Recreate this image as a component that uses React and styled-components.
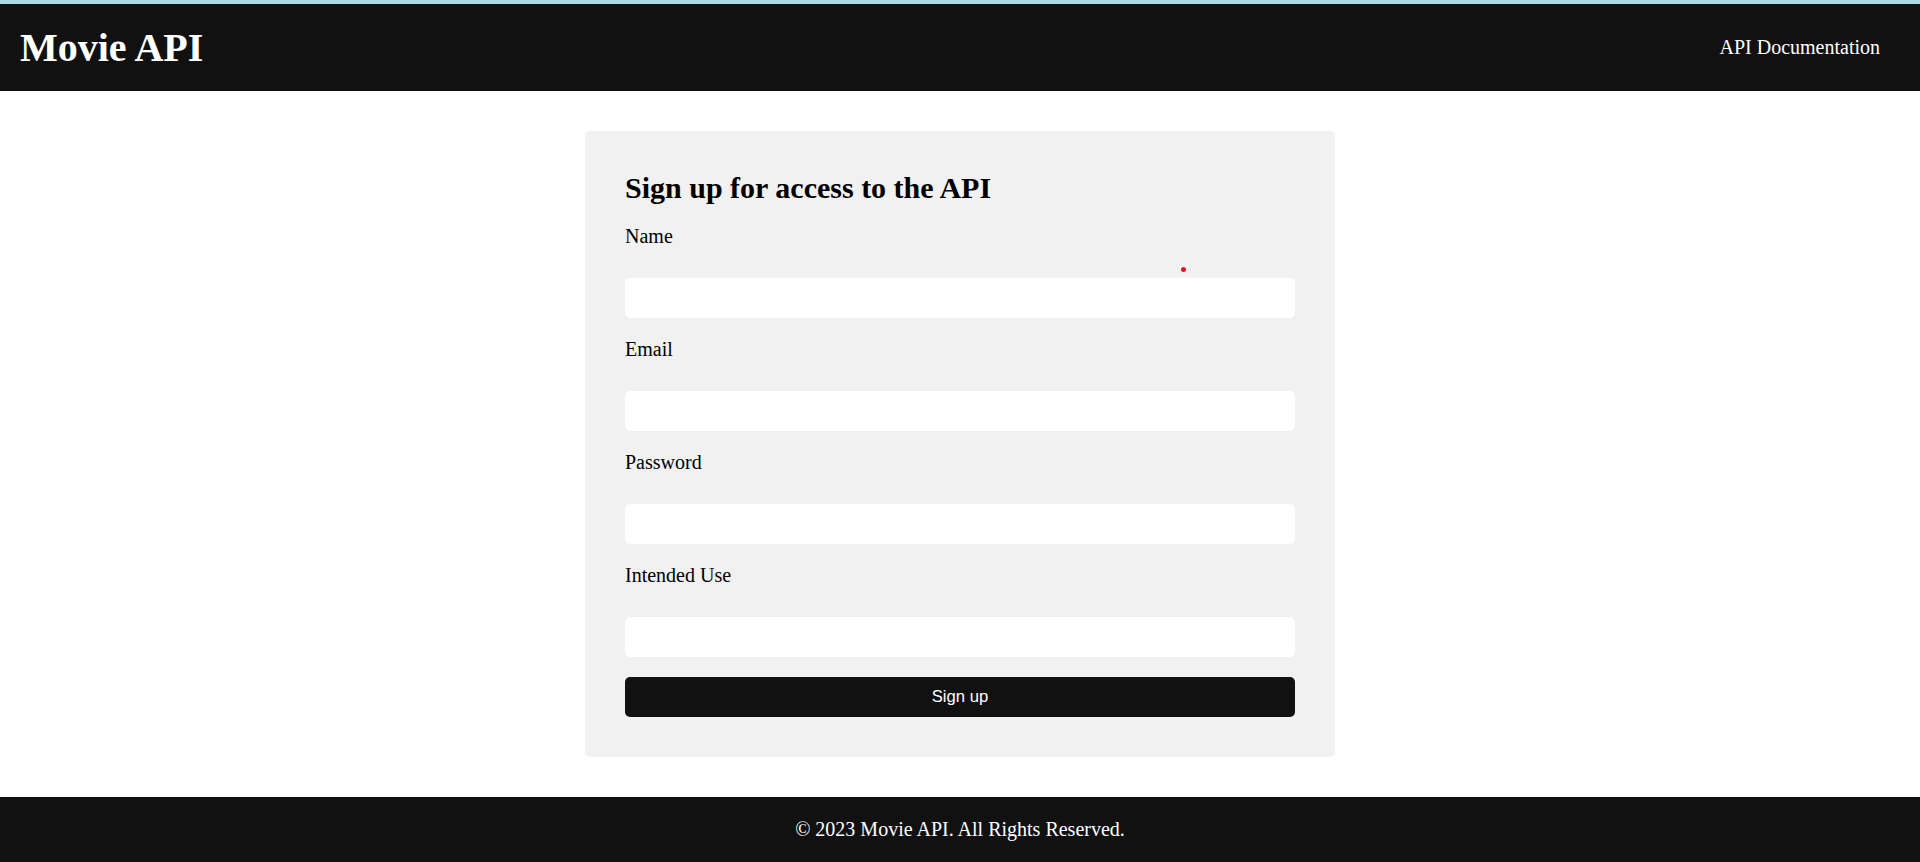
import React from 'react';
import styled, { createGlobalStyle } from 'styled-components';

const GlobalStyle = createGlobalStyle`
  * {
    box-sizing: border-box;
  }
  body {
    margin: 0;
    background: #ffffff;
    font-family: "Liberation Serif", "Times New Roman", serif;
    color: #000;
  }
`;

const Page = styled.div`
  min-height: 862px;
  display: flex;
  flex-direction: column;
  border-top: 4px solid #add8e6;
`;

const Header = styled.header`
  height: 87px;
  background: #111111;
  color: #ffffff;
  display: flex;
  align-items: center;
  justify-content: space-between;
  padding: 0 40px 0 20px;
`;

const Logo = styled.h1`
  margin: 0;
  font-size: 40px;
  font-weight: bold;
`;

const NavLink = styled.a`
  color: #ffffff;
  text-decoration: none;
  font-size: 20px;
`;

const Main = styled.main`
  flex: 1;
  display: flex;
  justify-content: center;
  padding: 40px 0;
`;

const Card = styled.form`
  position: relative;
  width: 750px;
  background: #f1f1f1;
  border-radius: 5px;
  padding: 40px;
`;

const Heading = styled.h2`
  margin: 0 0 20px;
  font-size: 30px;
  font-weight: bold;
`;

const Label = styled.label`
  display: block;
  font-size: 20px;
  margin-bottom: 30px;
`;

const Input = styled.input`
  display: block;
  width: 100%;
  height: 40px;
  border: none;
  border-radius: 5px;
  background: #ffffff;
  margin-bottom: 20px;
  padding: 0 10px;
  outline: none;
`;

const Button = styled.button`
  display: block;
  width: 100%;
  height: 40px;
  border: none;
  border-radius: 5px;
  background: #111111;
  color: #ffffff;
  font-family: "Liberation Sans", Arial, sans-serif;
  font-size: 16.67px;
  cursor: pointer;
`;

const Dot = styled.span`
  position: absolute;
  left: 596px;
  top: 136px;
  width: 5px;
  height: 5px;
  border-radius: 50%;
  background: #e5141e;
`;

const Footer = styled.footer`
  height: 65px;
  background: #111111;
  color: #ffffff;
  display: flex;
  align-items: center;
  justify-content: center;
  font-size: 20px;
`;

const fields = [
  { id: 'name', label: 'Name', type: 'text' },
  { id: 'email', label: 'Email', type: 'email' },
  { id: 'password', label: 'Password', type: 'password' },
  { id: 'use', label: 'Intended Use', type: 'text' },
];

const App = () => (
  <>
    <GlobalStyle />
    <Page>
      <Header>
        <Logo>Movie API</Logo>
        <NavLink href="#">API Documentation</NavLink>
      </Header>
      <Main>
        <Card onSubmit={(e) => e.preventDefault()}>
          <Dot />
          <Heading>Sign up for access to the API</Heading>
          {fields.map((f) => (
            <React.Fragment key={f.id}>
              <Label htmlFor={f.id}>{f.label}</Label>
              <Input id={f.id} type={f.type} />
            </React.Fragment>
          ))}
          <Button type="submit">Sign up</Button>
        </Card>
      </Main>
      <Footer>© 2023 Movie API. All Rights Reserved.</Footer>
    </Page>
  </>
);

export default App;
